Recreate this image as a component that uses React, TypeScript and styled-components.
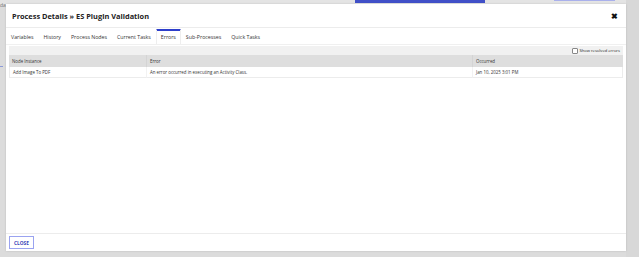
import React from 'react';
import styled, { createGlobalStyle } from 'styled-components';

const GlobalStyle = createGlobalStyle`
  html, body {
    margin: 0;
    padding: 0;
    width: 639px;
    height: 257px;
    overflow: hidden;
    background: #dcdcdc;
    font-family: 'Open Sans', 'Noto Sans', sans-serif;
  }
`;

const Page = styled.div`
  position: relative;
  width: 639px;
  height: 257px;
  background: #dcdcdc;
`;

// dimmed page behind the dialog
const TopStrip = styled.div`
  display: flex;
  height: 4px;
  background: #e4e4e4;
  padding-left: 355px;
  gap: 69px;
`;

const StripTab = styled.div<{ $w: number; $light?: boolean }>`
  width: ${(p) => p.$w}px;
  height: ${(p) => (p.$light ? 1 : 3)}px;
  background: ${(p) => (p.$light ? '#a9b0ec' : '#4150c8')};
`;

const SideText = styled.div`
  position: absolute;
  left: 0;
  top: 2px;
  font-size: 5px;
  color: #777;
`;

const SideTick = styled.div`
  position: absolute;
  left: 0;
  top: 66px;
  width: 3px;
  height: 1px;
  background: #8c9ad8;
`;

const RightGutter = styled.div`
  position: absolute;
  right: 0;
  top: 0;
  width: 13px;
  height: 257px;
  background: #d8d8d8;
`;

const Modal = styled.div`
  position: absolute;
  left: 6px;
  top: 4px;
  width: 620px;
  height: 247px;
  background: #fff;
  box-shadow: 0 0 2px rgba(0, 0, 0, 0.15);
  display: flex;
  flex-direction: column;
`;

const Header = styled.div`
  display: flex;
  align-items: center;
  justify-content: space-between;
  height: 23px;
  padding: 0 8px 0 6px;
  border-bottom: 1px solid #ececec;
`;

const Title = styled.h1`
  margin: 0;
  font-size: 7.4px;
  font-weight: 700;
  color: #222;
`;

const CloseX = styled.span`
  font-size: 8px;
  font-weight: 700;
  color: #111;
  line-height: 1;
`;

const Tabs = styled.div`
  display: flex;
  height: 15px;
  margin-top: 1px;
  border-bottom: 1px solid #f0f0f0;
`;

const Tab = styled.div<{ $active?: boolean }>`
  display: flex;
  align-items: center;
  padding: 0 4px;
  font-size: 5.25px;
  color: #333;
  border-top: 1px solid ${(p) => (p.$active ? '#2d3ecb' : 'transparent')};
  box-shadow: ${(p) => (p.$active ? 'inset 0 1px 0 #2d3ecb' : 'none')};
  border-left: 1px solid ${(p) => (p.$active ? '#eee' : 'transparent')};
  border-right: 1px solid ${(p) => (p.$active ? '#eee' : 'transparent')};
  background: #fff;
`;

const Body = styled.div`
  flex: 1;
  padding: 1px 3px 0 3px;
`;

const Toolbar = styled.div`
  display: flex;
  justify-content: flex-end;
  align-items: center;
  height: 9px;
  background: #f1f1f1;
  padding-right: 3px;
`;

const CheckLabel = styled.label`
  display: flex;
  align-items: center;
  gap: 1.5px;
  font-size: 4.1px;
  color: #222;
`;

const CheckBox = styled.span`
  width: 4px;
  height: 4px;
  border: 0.5px solid #888;
  border-radius: 1px;
  background: #fff;
`;

const Table = styled.div`
  display: grid;
  grid-template-columns: 137px 326px 1fr;
`;

const HeadCell = styled.div`
  height: 12px;
  display: flex;
  align-items: center;
  padding-left: 3px;
  background: #dedede;
  font-size: 4.4px;
  color: #333;
  border-left: 1px solid #d4d4d4;
  &:first-child {
    border-left: none;
  }
`;

const Cell = styled.div`
  height: 10px;
  display: flex;
  align-items: center;
  padding-left: 3px;
  font-size: 4.4px;
  color: #333;
  border-bottom: 1px solid #ececec;
  border-left: 1px solid #f2f2f2;
  &:nth-child(4) {
    border-left: 1px solid #ececec;
  }
  &:last-child {
    border-right: 1px solid #ececec;
  }
`;

const Footer = styled.div`
  height: 17px;
  border-top: 1px solid #ececec;
  display: flex;
  align-items: center;
  padding-left: 3px;
`;

const CloseButton = styled.button`
  height: 13px;
  padding: 0 4px;
  border: 1px solid #9aa3f0;
  background: #fff;
  color: #3b46b8;
  font-family: inherit;
  font-size: 4.8px;
  font-weight: 700;
`;

const tabs = ['Variables', 'History', 'Process Nodes', 'Current Tasks', 'Errors', 'Sub-Processes', 'Quick Tasks'];

const App: React.FC = () => {
  return (
    <Page>
      <GlobalStyle />
      <TopStrip>
        <StripTab $w={130} />
        <StripTab $w={61} $light />
      </TopStrip>
      <SideText>da</SideText>
      <SideTick />
      <RightGutter />
      <Modal>
        <Header>
          <Title>Process Details » ES Plugin Validation</Title>
          <CloseX>✖</CloseX>
        </Header>
        <Tabs>
          {tabs.map((t) => (
            <Tab key={t} $active={t === 'Errors'}>
              {t}
            </Tab>
          ))}
        </Tabs>
        <Body>
          <Toolbar>
            <CheckLabel>
              <CheckBox />
              Show resolved errors
            </CheckLabel>
          </Toolbar>
          <Table>
            <HeadCell>Node Instance</HeadCell>
            <HeadCell>Error</HeadCell>
            <HeadCell>Occurred</HeadCell>
            <Cell>Add Image To PDF</Cell>
            <Cell>An error occurred in executing an Activity Class.</Cell>
            <Cell>Jan 10, 2025 3:01 PM</Cell>
          </Table>
        </Body>
        <Footer>
          <CloseButton>CLOSE</CloseButton>
        </Footer>
      </Modal>
    </Page>
  );
};

export default App;
